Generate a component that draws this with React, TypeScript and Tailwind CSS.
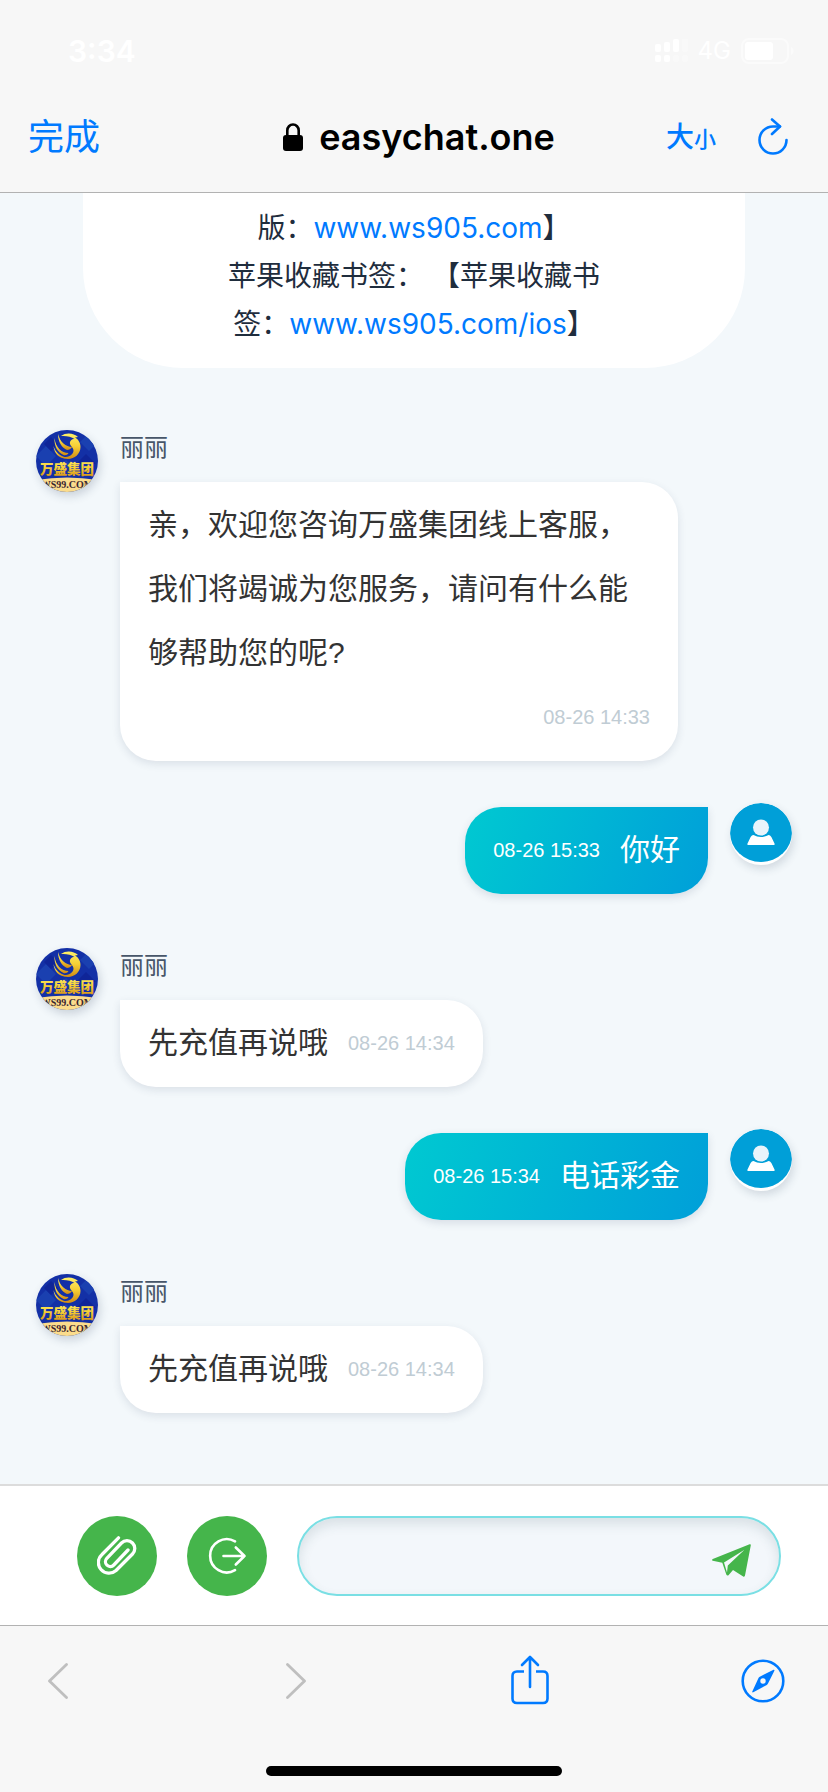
import { useState } from "react"

interface Message {
  id: number
  from: "agent" | "user"
  lines: string[]
  time: string
}

const messages: Message[] = [
  {
    id: 1,
    from: "agent",
    lines: [
      "亲，欢迎您咨询万盛集团线上客服，",
      "我们将竭诚为您服务，请问有什么能",
      "够帮助您的呢?",
    ],
    time: "08-26 14:33",
  },
  { id: 2, from: "user", lines: ["你好"], time: "08-26 15:33" },
  { id: 3, from: "agent", lines: ["先充值再说哦"], time: "08-26 14:34" },
  { id: 4, from: "user", lines: ["电话彩金"], time: "08-26 15:34" },
  { id: 5, from: "agent", lines: ["先充值再说哦"], time: "08-26 14:34" },
]

function StatusBar() {
  return (
    <div className="flex h-[102px] items-center justify-between pl-[68px] pr-[34px] text-white">
      <span className="text-[30px] font-semibold leading-none">3:34</span>
      <div className="flex items-center gap-[10px]">
        <svg width="33" height="24" viewBox="0 0 33 24" fill="currentColor">
          <rect x="0" y="5" width="6" height="8" rx="2" />
          <rect x="9" y="3" width="6" height="10" rx="2" />
          <rect x="18" y="0" width="6" height="13" rx="2" />
          <rect x="27" y="-2" width="6" height="15" rx="2" opacity="0.3" />
          <rect x="0" y="16" width="6" height="7" rx="2" />
          <rect x="9" y="16" width="6" height="7" rx="2" />
          <rect x="18" y="16" width="6" height="7" rx="2" opacity="0.3" />
          <rect x="27" y="16" width="6" height="7" rx="2" opacity="0.3" />
        </svg>
        <span className="text-2xl leading-none">4G</span>
        <svg width="53" height="26" viewBox="0 0 53 26">
          <rect x="1" y="1" width="46" height="24" rx="7" fill="none" stroke="#fff" strokeWidth="2" opacity="0.5" />
          <rect x="4" y="4" width="28" height="18" rx="3" fill="#fff" />
          <path d="M50 9c2 1 2.600 2.500 2.600 4s-.6 3-2.600 4z" fill="#fff" opacity="0.5" />
        </svg>
      </div>
    </div>
  )
}

function NavBar() {
  return (
    <div className="mb-5 grid h-[70px] grid-cols-[1fr_auto_1fr] items-center pl-7 pr-[38px] text-[#007aff]">
      <button type="button" className="justify-self-start text-[36px] leading-none">
        完成
      </button>
      <div className="flex items-center gap-4 pl-5 text-black">
        <svg width="20" height="28" viewBox="0 0 20 28">
          <rect x="0" y="12" width="20" height="16" rx="3" fill="currentColor" />
          <path d="M4.300 13V7.500a5.700 6 0 0 1 11.400 0V13" fill="none" stroke="currentColor" strokeWidth="2.600" />
        </svg>
        <span className="text-[36px] font-semibold leading-none">easychat.one</span>
      </div>
      <div className="flex items-center gap-10 justify-self-end">
        <button type="button" className="flex items-baseline font-medium leading-none">
          <span className="text-[28px]">大</span>
          <span className="text-[22px]">小</span>
        </button>
        <button type="button" aria-label="Reload">
          <svg
            width="34"
            height="38"
            viewBox="0 0 34 38"
            fill="none"
            stroke="currentColor"
            strokeWidth="2.600"
            strokeLinecap="round"
            strokeLinejoin="round"
          >
            <path d="M30.500 22A13.500 13.500 0 1 1 17 8.500h7" />
            <path d="M16 1.500l8 7-8 7.500" />
          </svg>
        </button>
      </div>
    </div>
  )
}

function NoticeCard() {
  return (
    <div className="mx-[83px] rounded-[100px] bg-white pb-5 pt-[100px] text-center font-['Inter','Noto_Sans_CJK_SC',sans-serif] text-[28px] leading-[48px] text-[#1f2d3d]">
      <p>棋牌游戏手机网页： 【手机</p>
      <p>
        版：
        <a href="#web" className="text-[#007aff]">
          www.ws905.com
        </a>
        】
      </p>
      <p>苹果收藏书签： 【苹果收藏书</p>
      <p>
        签：
        <a href="#ios" className="text-[#007aff]">
          www.ws905.com/ios
        </a>
        】
      </p>
    </div>
  )
}

function AgentAvatar() {
  return (
    <div className="size-[62px] shrink-0 overflow-hidden rounded-full shadow-[2px_4px_10px_rgba(40,60,90,0.2)]">
      <svg width="62" height="62" viewBox="0 0 62 62">
        <defs>
          <linearGradient id="gold" x1="0" y1="0" x2="0" y2="1">
            <stop offset="0" stopColor="#fdf06a" />
            <stop offset="0.5" stopColor="#f6cf35" />
            <stop offset="1" stopColor="#d08a14" />
          </linearGradient>
        </defs>
        <rect width="62" height="62" fill="#1330a6" />
        <path d="M0 26l10-10 10 10-10 10zM44 12l9-9 9 9-9 9zM22 38l8-8 8 8z" fill="#1a40b0" />
        <path d="M8 14l7-7 7 7-7 7zM40 34l10-10 10 10z" fill="#0f2598" />
        {/* phoenix with three wing feathers */}
        <path d="M22 4c2 8 8 13 14 13-1 2-3 3-5 3-5-2-9-8-9-16z" fill="url(#gold)" />
        <path d="M18.500 8c1 9 7 15 14 15-1 2-3 2.500-5 2-6-3-9.500-9-9-17z" fill="url(#gold)" />
        <path d="M17.500 16c2 7 8 11 14 11.500-6 2.500-13-2-14-11.500z" fill="url(#gold)" />
        <path
          d="M25 6c5-4 13-3 17 1l-3 .5c3 1.500 5.500 5 5.500 9.500 0 7-6 12-12.500 12-3 0-5-.8-7-2 7 1 12-2 12.500-6 .4-4-4.500-5-3.500-9 .5-2 2.500-3.500 4.500-3-3-2.500-9-3.500-13.500-3z"
          fill="url(#gold)"
        />
        <text
          x="31"
          y="44"
          textAnchor="middle"
          fontSize="13.500"
          fontWeight="900"
          fill="url(#gold)"
          className="font-['Noto_Sans_CJK_SC',sans-serif]"
        >
          万盛集团
        </text>
        <path d="M0 50q31-5 62 0v12H0z" fill="#fbdc8c" />
        <text
          x="31"
          y="58"
          textAnchor="middle"
          fontSize="10"
          fontWeight="700"
          fill="#3a2530"
          className="font-['Liberation_Serif',serif]"
        >
          WS99.COM
        </text>
      </svg>
    </div>
  )
}

function UserAvatar() {
  return (
    <div className="size-[62px] shrink-0 overflow-hidden rounded-full bg-white shadow-[2px_4px_8px_rgba(40,60,90,0.16)]">
      <svg width="62" height="59" viewBox="0 0 62 59">
        <ellipse cx="31" cy="29.500" rx="31" ry="29.500" fill="#009fd8" />
        <circle cx="31" cy="24.500" r="8" fill="#e8f4fb" />
        <path d="M23.500 32c4.500 2.600 10.500 2.600 15 0 1.500.2 2.300 1 3 2.200l3 6.300q.5 1.500-1 1.500h-25q-1.500 0-1-1.500l3-6.300c.7-1.200 1.500-2 3-2.200z" fill="#fff" />
      </svg>
    </div>
  )
}

function AgentMessage({ message }: { message: Message }) {
  const multiline = message.lines.length > 1

  return (
    <div className="flex items-start gap-[22px]">
      <AgentAvatar />
      <div className="flex flex-col items-start gap-4">
        <span className="h-9 text-2xl leading-9 text-[#475669]">丽丽</span>
        <div
          className={`flex rounded-[36px] rounded-tl-none bg-white px-7 pb-3 pt-[11px] shadow-[0_3px_8px_rgba(40,60,90,0.12)] ${
            multiline ? "flex-col" : "gap-5"
          }`}
        >
          <div className={`text-[30px] leading-[64px] text-[#333] ${multiline ? "pr-[22px]" : ""}`}>
            {message.lines.map((line) => (
              <p key={line}>{line}</p>
            ))}
          </div>
          <time className="text-right text-xl leading-[64px] text-[#c0ccd4]">{message.time}</time>
        </div>
      </div>
    </div>
  )
}

function UserMessage({ message }: { message: Message }) {
  return (
    <div className="flex items-start justify-end gap-[22px]">
      <div className="mt-1 flex gap-5 rounded-[36px] rounded-tr-none bg-linear-[110deg] from-[#00c9d1] to-[#009fd9] px-7 pb-3 pt-[11px] text-white shadow-[0_3px_8px_rgba(40,60,90,0.14)]">
        <time className="text-xl leading-[64px]">{message.time}</time>
        <p className="text-[30px] leading-[64px]">{message.lines[0]}</p>
      </div>
      <UserAvatar />
    </div>
  )
}

function Composer() {
  const [text, setText] = useState("")

  return (
    <form
      className="flex shrink-0 items-center gap-[30px] border-t-2 border-[#dcdcdc] bg-white pb-[29px] pl-[77px] pr-[47px] pt-[30px]"
      onSubmit={(e) => {
        e.preventDefault()
        setText("")
      }}
    >
      <button
        type="button"
        aria-label="Attach file"
        className="flex size-20 shrink-0 items-center justify-center rounded-full bg-[#45b54b] text-white"
      >
        <svg
          width="40"
          height="40"
          viewBox="0 0 40 40"
          fill="none"
          stroke="currentColor"
          strokeWidth="3.300"
          strokeLinecap="round"
          strokeLinejoin="round"
        >
          <path d="M21.500 1.800L5 18.500A9.700 9.700 0 0 0 19 34.500L35.500 18A7.700 7.700 0 0 0 24.500 7L9.800 22.300A4.800 4.800 0 0 0 16.800 29L31 14" />
        </svg>
      </button>
      <button
        type="button"
        aria-label="Leave chat"
        className="flex size-20 shrink-0 items-center justify-center rounded-full bg-[#45b54b] text-white"
      >
        <svg
          width="40"
          height="40"
          viewBox="0 0 40 40"
          fill="none"
          stroke="currentColor"
          strokeWidth="2.600"
          strokeLinecap="round"
          strokeLinejoin="round"
        >
          <path d="M28 5.400A16.600 16.600 0 1 0 28 34.200" />
          <path d="M16.500 20h21M28.800 11.500l8.700 8.500-8.700 8.500" />
        </svg>
      </button>
      <div className="flex h-20 min-w-0 flex-1 items-center rounded-full border-2 border-[#7adfe4] bg-[#f3f7fb] pl-8 pr-7 shadow-[inset_0_6px_12px_rgba(60,90,100,0.14)]">
        <input
          type="text"
          aria-label="Message"
          value={text}
          onChange={(e) => setText(e.target.value)}
          className="min-w-0 flex-1 bg-transparent text-[30px] text-[#333] outline-none"
        />
        <button type="submit" aria-label="Send" className="mt-2 text-[#45b54b]">
          <svg width="39" height="33" viewBox="0 0 39 33" fill="currentColor">
            <path d="M37.600.3c.9-.3 1.300 0 1.200 1L33 31.600c-.2 1-.9 1.300-1.800.8L21 26l-4.300 5c-.8.900-2 .6-2.400-.5L10.300 18.700.8 16.700c-1-.3-1-1.200 0-1.600zM32.500 5.800L12 18.600l3 9.800.8-6.800z" fillRule="evenodd" />
          </svg>
        </button>
      </div>
    </form>
  )
}

function Toolbar() {
  const button = "flex size-12 items-center justify-center"

  return (
    <nav className="h-[167px] shrink-0 border-t border-[#b2b2b2] bg-[#f7f7f7] text-[#007aff]">
      <div className="flex h-[110px] items-center justify-between pl-[34px] pr-[41px]">
        <div className="flex gap-[190px] text-[#bfbfbf]">
          <button type="button" aria-label="Back" className={button}>
            <svg width="20" height="36" viewBox="0 0 20 36" fill="none" stroke="currentColor" strokeWidth="2.800" strokeLinecap="round" strokeLinejoin="round">
              <path d="M18.500 1.500L1.500 18l17 16.500" />
            </svg>
          </button>
          <button type="button" aria-label="Forward" className={button}>
            <svg width="20" height="36" viewBox="0 0 20 36" fill="none" stroke="currentColor" strokeWidth="2.800" strokeLinecap="round" strokeLinejoin="round">
              <path d="M1.500 1.500L18.500 18l-17 16.500" />
            </svg>
          </button>
        </div>
        <button type="button" aria-label="Share" className={button}>
          <svg width="38" height="52" viewBox="0 0 38 52" fill="none" stroke="currentColor" strokeWidth="2.600" strokeLinecap="round" strokeLinejoin="round">
            <path d="M19 32V2M11 10l8-8 8 8" />
            <path d="M13 16.500H6Q1.500 16.500 1.500 21v22.500Q1.500 48 6 48h26q4.500 0 4.500-4.500V21q0-4.500-4.500-4.500h-7" strokeLinecap="butt" />
          </svg>
        </button>
        <button type="button" aria-label="Open in Safari" className={button}>
          <svg width="44" height="44" viewBox="0 0 44 44">
            <circle cx="22" cy="22" r="20.300" fill="none" stroke="currentColor" strokeWidth="2.600" />
            <path
              d="M32.500 10.800c.7-.3 1.200.2.900.9L27 24.500c-.3.600-.6 1-1.200 1.400L12.300 33.300c-.8.400-1.400-.2-1-.9L17.500 19c.3-.6.7-1 1.300-1.300zM22 19.300a2.700 2.700 0 1 0 0 5.400 2.700 2.700 0 0 0 0-5.400z"
              fill="currentColor"
              fillRule="evenodd"
            />
          </svg>
        </button>
      </div>
      <div className="mx-auto mt-[30px] h-[10px] w-[296px] rounded-full bg-black" />
    </nav>
  )
}

export default function App() {
  return (
    <div className="flex h-screen flex-col overflow-hidden bg-[#f3f8fb] font-['Inter','Noto_Sans_CJK_SC',sans-serif]">
      <header className="shrink-0 border-b border-[#b2b2b2] bg-[#f7f7f7]">
        <StatusBar />
        <NavBar />
      </header>

      <main className="flex min-h-0 flex-1 flex-col justify-end overflow-hidden font-['Liberation_Sans','Noto_Sans_CJK_SC',sans-serif]">
        <NoticeCard />
        <div className="flex flex-col px-9 pb-[71px] pt-2">
          {messages.map((message) =>
            message.from === "agent" ? (
              <div key={message.id} className="pt-[54px]">
                <AgentMessage message={message} />
              </div>
            ) : (
              <div key={message.id} className="pt-[42px]">
                <UserMessage message={message} />
              </div>
            )
          )}
        </div>
      </main>

      <Composer />
      <Toolbar />
    </div>
  )
}
